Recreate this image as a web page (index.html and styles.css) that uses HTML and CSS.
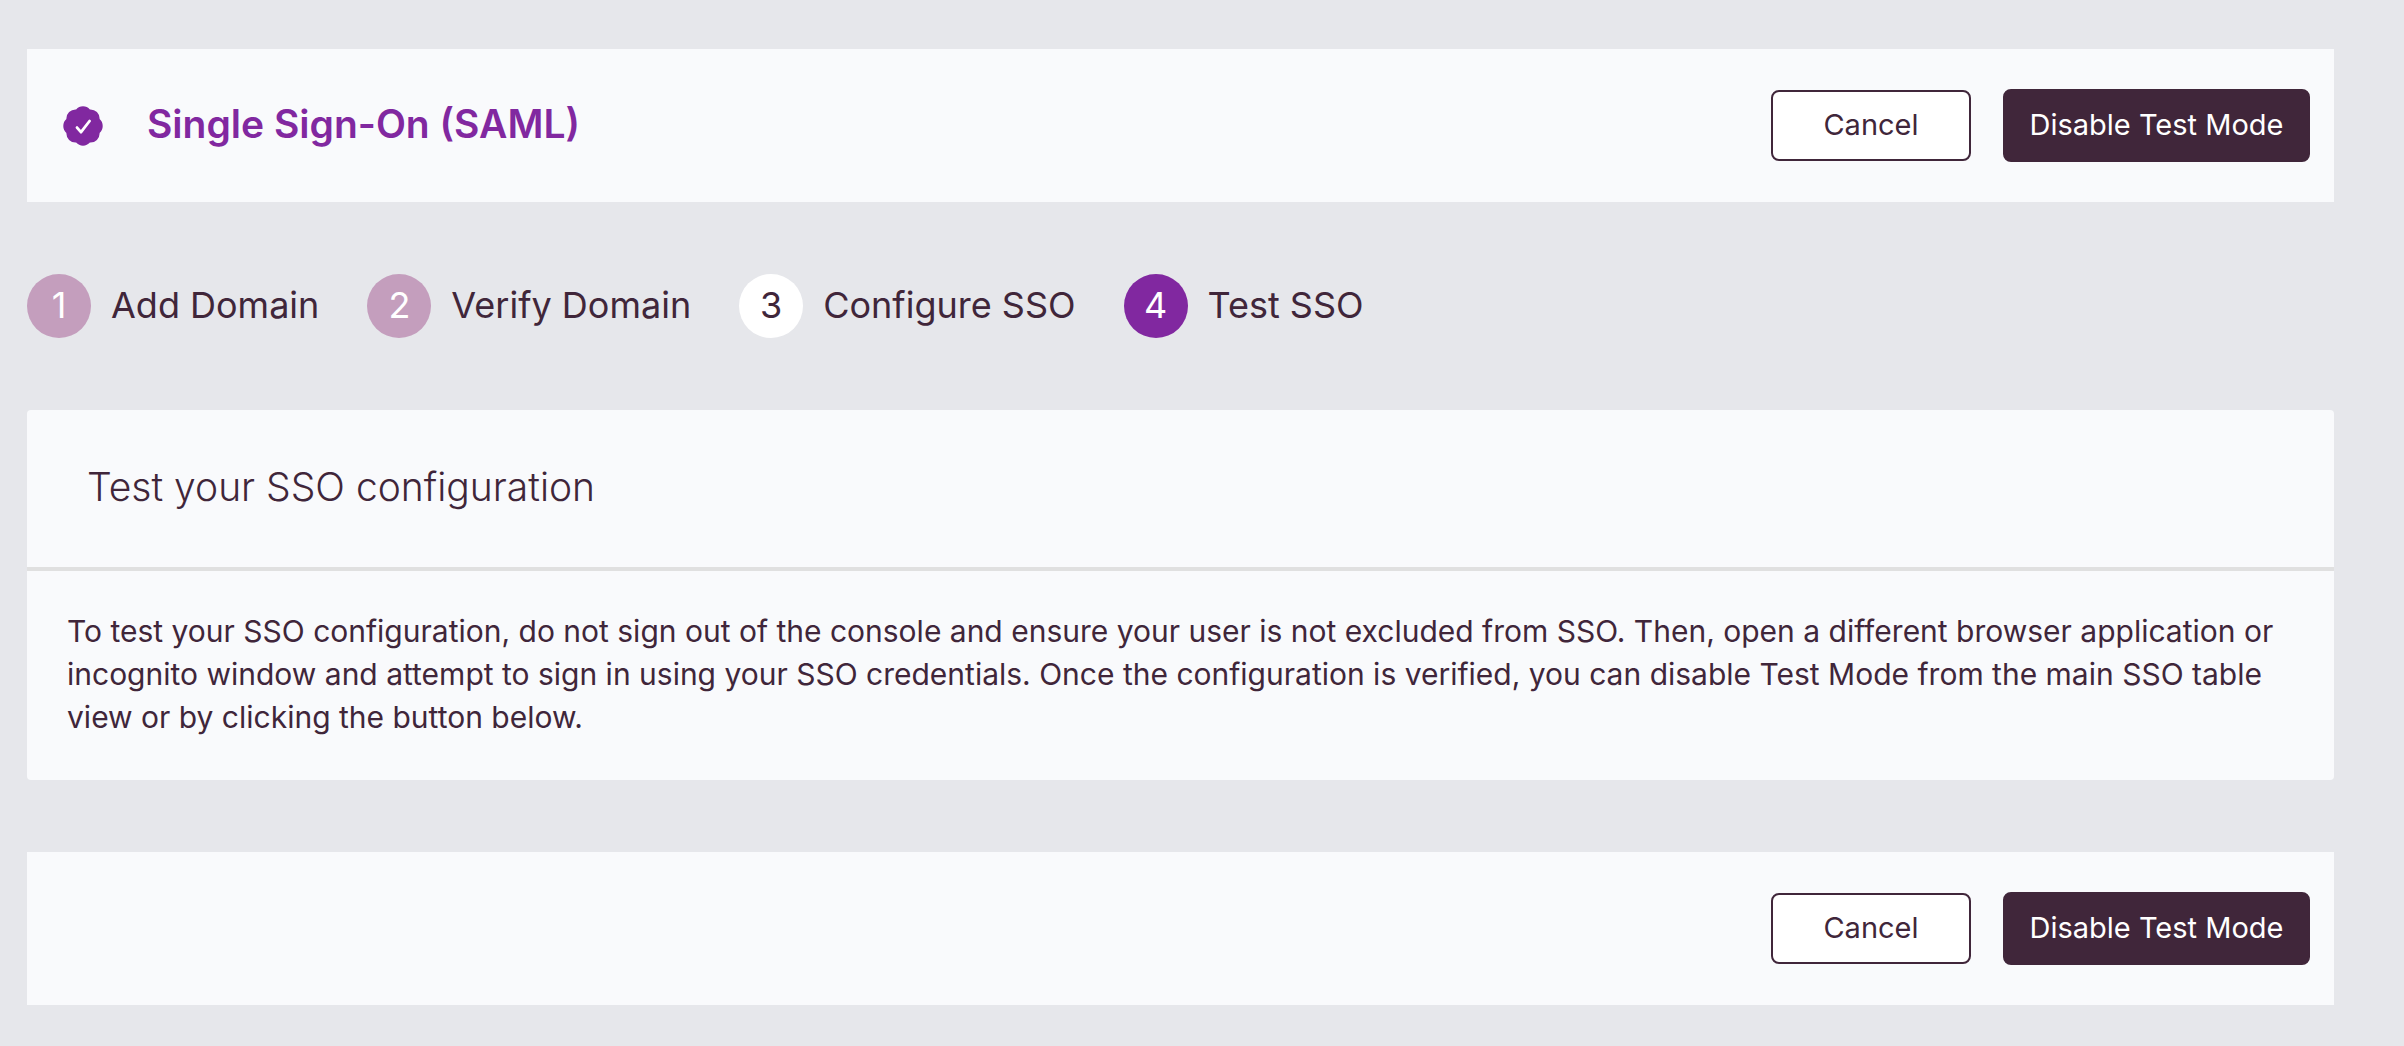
FILE: index.html
```html
<!DOCTYPE html>
<html lang="en">
<head>
  <meta charset="UTF-8">
  <meta name="viewport" content="width=device-width, initial-scale=1">
  <title>Single Sign-On (SAML)</title>
  <link rel="stylesheet" href="styles.css">
</head>
<body>
  <header class="bar">
    <svg class="badge" viewBox="-20 -20 40 40" aria-hidden="true">
      <path fill="#8128a0" d="M-6.9-16.6A9.2 9.2 0 0 1 6.9-16.6A9.2 9.2 0 0 1 16.6-6.9A9.2 9.2 0 0 1 16.6 6.9A9.2 9.2 0 0 1 6.9 16.6A9.2 9.2 0 0 1-6.9 16.6A9.2 9.2 0 0 1-16.6 6.9A9.2 9.2 0 0 1-16.6-6.9A9.2 9.2 0 0 1-6.9-16.6Z"/>
      <path fill="none" stroke="#fff" stroke-width="2.8" stroke-linecap="round" stroke-linejoin="round" d="M-6 1.6L-2 6.2L6.6-5"/>
    </svg>
    <h1>Single Sign-On (SAML)</h1>
    <div class="actions">
      <button type="button" class="btn cancel">Cancel</button>
      <button type="button" class="btn primary">Disable Test Mode</button>
    </div>
  </header>

  <main>
    <ol class="steps">
      <li><span class="num done">1</span>Add Domain</li>
      <li><span class="num done">2</span>Verify Domain</li>
      <li><span class="num">3</span>Configure SSO</li>
      <li aria-current="step"><span class="num current">4</span>Test SSO</li>
    </ol>

    <section class="card">
      <h2>Test your SSO configuration</h2>
      <p>To test your SSO configuration, do not sign out of the console and ensure your user is not excluded from SSO. Then, open a different browser application or incognito window and attempt to sign in using your SSO credentials. Once the configuration is verified, you can disable Test Mode from the main SSO table view or by clicking the button below.</p>
    </section>
  </main>

  <footer class="bar">
    <div class="actions">
      <button type="button" class="btn cancel">Cancel</button>
      <button type="button" class="btn primary">Disable Test Mode</button>
    </div>
  </footer>
</body>
</html>
```
FILE: styles.css
```css
* {
  box-sizing: border-box;
}

body {
  margin: 0;
  padding: 49px 70px 40px 27px;
  background-color: #e6e7eb;
  color: #40263a;
  font-family: Inter, "Liberation Sans", sans-serif;
}

.bar {
  display: flex;
  align-items: center;
  padding: 40px 24px 40px 36px;
  background-color: #f9fafc;
}

.badge {
  width: 40px;
  height: 40px;
  margin-right: 44px;
}

h1 {
  margin: 0;
  padding-bottom: 4px;
  color: #8128a0;
  font-size: 39px;
  font-weight: 600;
  line-height: 48px;
}

.actions {
  display: flex;
  align-items: center;
  gap: 32px;
  margin-left: auto;
}

.btn {
  border: 2px solid #40263a;
  border-radius: 8px;
  font-family: inherit;
  font-size: 29px;
  line-height: 35px;
  cursor: pointer;
}

.cancel {
  min-width: 200px;
  padding: 15px 24px 17px;
  background-color: #fff;
  color: #40263a;
}

.primary {
  min-width: 307px;
  padding: 16px 16px 18px;
  background-color: #40263a;
  color: #fff;
}

.steps {
  display: flex;
  gap: 48px;
  margin: 72px 0;
  padding: 0;
  list-style: none;
  font-size: 36px;
  line-height: 62px;
}

.steps li {
  display: flex;
  gap: 20px;
}

.num {
  width: 64px;
  height: 64px;
  border-radius: 50%;
  background-color: #fff;
  text-align: center;
}

.done {
  background-color: #c49ebd;
  color: #fff;
}

.current {
  background-color: #8128a0;
  color: #fff;
}

.card {
  margin-bottom: 72px;
  border-radius: 4px;
  background-color: #f9fafc;
}

h2 {
  margin: 0;
  padding: 53px 60px 56px;
  border-bottom: 4px solid #e0e0e0;
  font-size: 39px;
  font-weight: 300;
  line-height: 48px;
}

.card p {
  margin: 0;
  padding: 39px 40px 41px;
  font-size: 30px;
  line-height: 43px;
}
```
